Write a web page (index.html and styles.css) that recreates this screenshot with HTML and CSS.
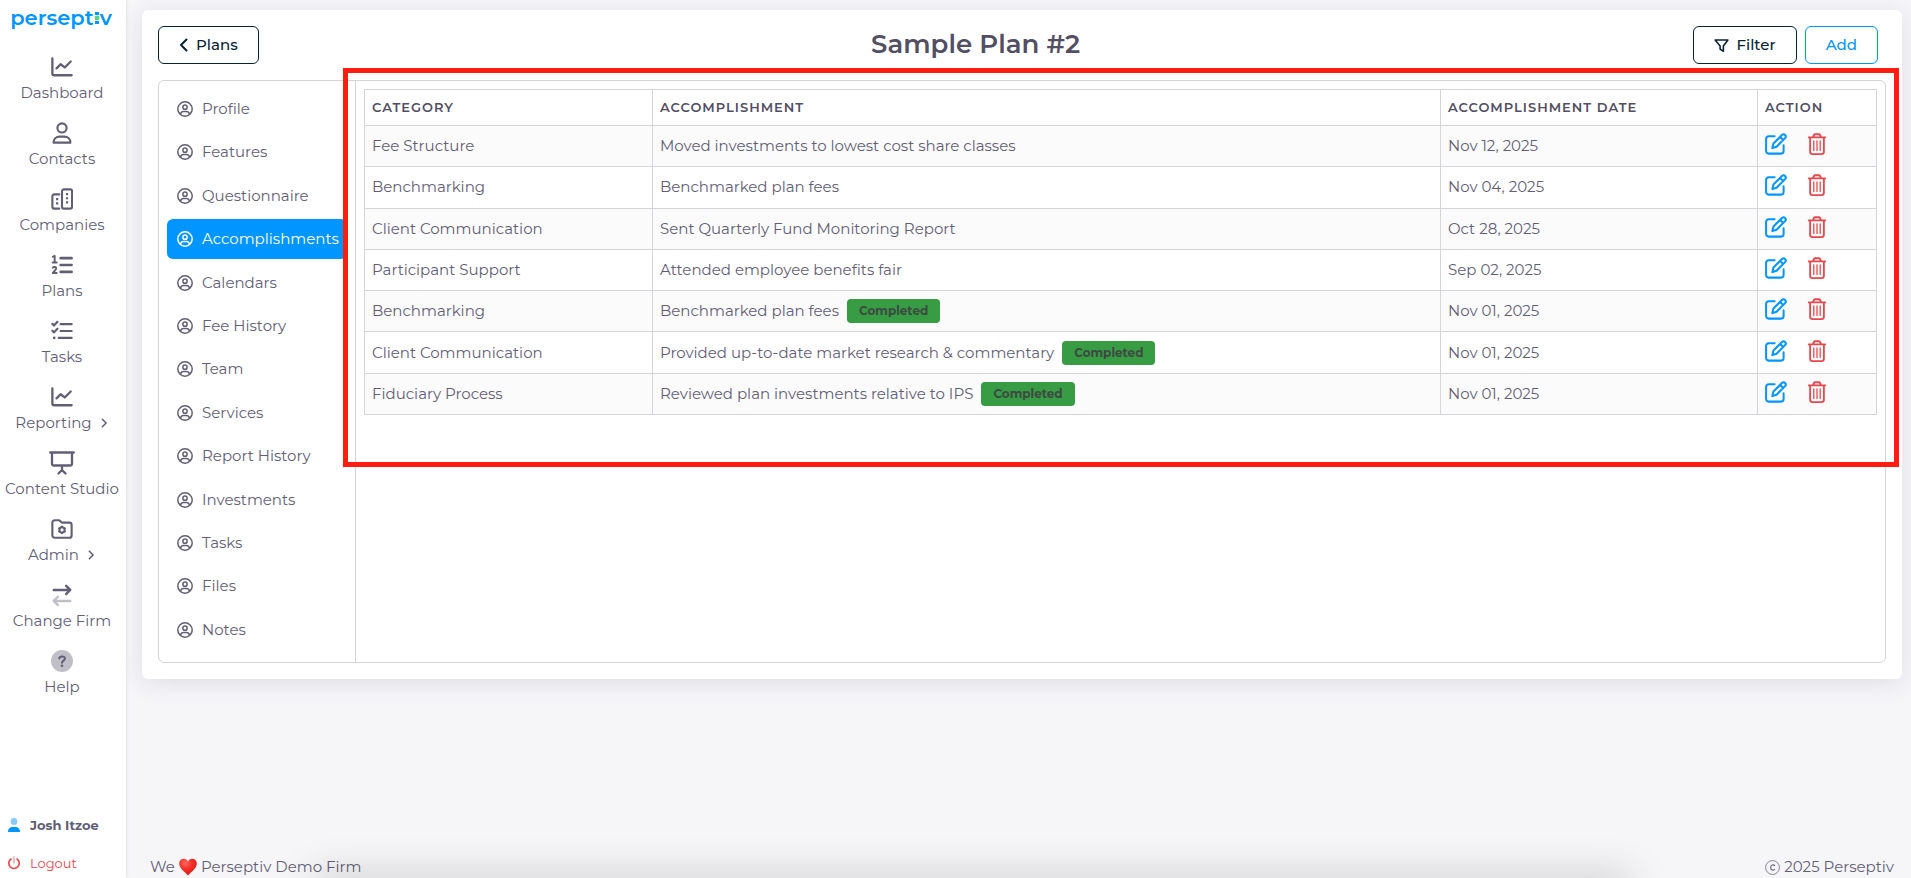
FILE: index.html
```html
<!DOCTYPE html>
<html lang="en">
<head>
<meta charset="utf-8">
<meta name="viewport" content="width=device-width, initial-scale=1">
<title>Perseptiv - Sample Plan #2</title>
<link rel="stylesheet" href="styles.css">
</head>
<body>
<svg class="sprite" aria-hidden="true">
  <symbol id="i-chart" viewBox="0 0 24 24"><path d="M1.500 2.500v16.500a2 2 0 0 0 2 2H22.500M6 13.500l4.500-4.500 4.500 3.500 6.500-6.500" fill="none" stroke="currentColor" stroke-width="2.500" stroke-linecap="round" stroke-linejoin="round"/></symbol>
  <symbol id="i-person" viewBox="0 0 24 24"><circle cx="12" cy="6.500" r="5" fill="none" stroke="currentColor" stroke-width="2.300"/><path d="M2.800 22.500c0-4 3-6.500 6.500-6.500h5.400c3.500 0 6.500 2.500 6.500 6.500z" fill="none" stroke="currentColor" stroke-width="2.300" stroke-linejoin="round"/></symbol>
  <symbol id="i-buildings" viewBox="0 0 24 24"><g fill="none" stroke="currentColor" stroke-width="2.300" stroke-linecap="round"><rect x="12" y="1.500" width="11" height="21" rx="2"/><path d="M9 7H3.500A2 2 0 0 0 1.500 9v11.500a2 2 0 0 0 2 2H9"/></g><path d="M16.300 5.500h2.400v2.400h-2.400zM16.300 10h2.400v2.400h-2.400zM16.300 14.500h2.400v2.400h-2.400zM5.500 11h2.400v2.400H5.500zM5.500 15.500h2.400v2.400H5.500z" fill="currentColor"/></symbol>
  <symbol id="i-list" viewBox="0 0 24 24"><path d="M10.500 4.500H22.500M10.500 12H22.500M10.500 19.500H22.500" fill="none" stroke="currentColor" stroke-width="2.800" stroke-linecap="round"/><path d="M2 3l2-1v7M1.800 9.200h4.400M2 15c1-1.500 4-1 3.600 1-.3 1.500-2.600 3-3.600 4.800h4.200" fill="none" stroke="currentColor" stroke-width="2.100" stroke-linecap="round" stroke-linejoin="round"/></symbol>
  <symbol id="i-checks" viewBox="0 0 24 24"><path d="M10.500 4.500h12M10.500 12h12M8.500 19.500h14M1.500 4.200l1.800 1.800L7 2M1.500 11.700l1.800 1.800L7 9.500" fill="none" stroke="currentColor" stroke-width="2.400" stroke-linecap="round" stroke-linejoin="round"/><circle cx="3.500" cy="19.500" r="1.500" fill="currentColor"/></symbol>
  <symbol id="i-screen" viewBox="0 0 26 24"><path d="M1.200 1.500h23.600M3 2v10.500a2 2 0 0 0 2 2h16a2 2 0 0 0 2-2V2M13 15v4M9.500 22.500L13 19l3.500 3.500" fill="none" stroke="currentColor" stroke-width="2.300" stroke-linecap="round" stroke-linejoin="round"/></symbol>
  <symbol id="i-folder" viewBox="0 0 24 24"><path d="M1.500 5A2.500 2.500 0 0 1 4 2.500h4.500c1.500 0 2 2.500 4 2.500H20A2.500 2.500 0 0 1 22.500 7.500V19a2.500 2.500 0 0 1-2.500 2.500H4A2.500 2.500 0 0 1 1.500 19z" fill="none" stroke="currentColor" stroke-width="2.300"/><circle cx="12" cy="13" r="2.800" fill="none" stroke="currentColor" stroke-width="2.200"/><path d="M12 8.500v2M12 15.500v2M8.100 10.800l1.700 1M14.200 14.200l1.700 1M8.100 15.200l1.700-1M14.200 11.800l1.700-1" stroke="currentColor" stroke-width="2.200"/></symbol>
  <symbol id="i-swap" viewBox="0 0 24 24"><path d="M3 6.500h18M16.500 2l4.500 4.500-4.500 4.500" fill="none" stroke="currentColor" stroke-width="2.600" stroke-linecap="round" stroke-linejoin="round"/><path d="M21 18.500H3M7.500 14L3 18.500 7.500 23" fill="none" stroke="currentColor" stroke-width="2.600" stroke-linecap="round" stroke-linejoin="round" opacity=".4"/></symbol>
  <symbol id="i-help" viewBox="0 0 24 24"><circle cx="12" cy="12" r="12" fill="currentColor" opacity=".4"/><path d="M9 9.200c.3-3 6.300-3 6.200.3-.1 2-3.200 2.200-3.200 4.300" fill="none" stroke="currentColor" stroke-width="2.200" stroke-linecap="round"/><circle cx="12" cy="17.200" r="1.400" fill="currentColor"/></symbol>
  <symbol id="i-right" viewBox="0 0 12 12"><path d="M4 1.500L8.500 6 4 10.500" fill="none" stroke="currentColor" stroke-width="1.900" stroke-linecap="round" stroke-linejoin="round"/></symbol>
  <symbol id="i-left" viewBox="0 0 9 16"><path d="M7.500 2.500L2 8l5.500 5.500" fill="none" stroke="currentColor" stroke-width="2" stroke-linecap="round" stroke-linejoin="round"/></symbol>
  <symbol id="i-user" viewBox="0 0 16 16"><g fill="none" stroke="currentColor" stroke-width="1.500"><circle cx="8" cy="8" r="7.200"/><circle cx="8" cy="6.200" r="2.100"/><path d="M3.500 13c.5-2 2-2.500 3-2.500h3c1 0 2.500.5 3 2.500"/></g></symbol>
  <symbol id="i-filter" viewBox="0 0 16 16"><path d="M1.200 2.200h13.600L10 8.500v5.700l-3.500-2.400V8.500z" fill="none" stroke="currentColor" stroke-width="1.700" stroke-linejoin="round"/></symbol>
  <symbol id="i-edit" viewBox="0 0 24 24"><path d="M10.500 3.500H4A2.800 2.800 0 0 0 1.200 6.300v13.200A2.800 2.800 0 0 0 4 22.500h13.500a2.800 2.800 0 0 0 2.800-2.800V13.500M8 16.500l1.200-5L18.500 2.200a2.400 2.400 0 0 1 3.400 3.400L12.600 15zM16.500 4.200l3.400 3.400" fill="none" stroke="currentColor" stroke-width="2.200" stroke-linecap="round" stroke-linejoin="round"/></symbol>
  <symbol id="i-trash" viewBox="0 0 20 24"><path d="M1 4.800h18M2.500 5v15.500a2.500 2.500 0 0 0 2.500 2.500h10a2.500 2.500 0 0 0 2.500-2.500V5M5.500 4.500l1.200-2.300a1.500 1.500 0 0 1 1.300-.8h4a1.500 1.500 0 0 1 1.300.8l1.200 2.300" fill="none" stroke="currentColor" stroke-width="2" stroke-linecap="round" stroke-linejoin="round"/><path d="M6.500 8.500v10.500M10 8.500v10.500M13.500 8.500v10.500" stroke="currentColor" stroke-width="1.400" stroke-linecap="round"/></symbol>
</svg>

<div class="app">
  <aside class="sidebar">
    <a class="logo" href="#" aria-label="perseptiv">persept<svg class="logo-i" viewBox="0 0 6 14" aria-hidden="true"><path d="M1 1h4v3H1zM1 10h4v3H1z" fill="#0095ff"/><circle cx="3" cy="7" r="2.400" fill="#4cd787"/></svg>v</a>
    <nav class="menu">
      <a href="#"><svg><use href="#i-chart"/></svg><span>Dashboard</span></a>
      <a href="#"><svg><use href="#i-person"/></svg><span>Contacts</span></a>
      <a href="#"><svg><use href="#i-buildings"/></svg><span>Companies</span></a>
      <a href="#"><svg><use href="#i-list"/></svg><span>Plans</span></a>
      <a href="#"><svg><use href="#i-checks"/></svg><span>Tasks</span></a>
      <a href="#"><svg><use href="#i-chart"/></svg><span class="more">Reporting <svg><use href="#i-right"/></svg></span></a>
      <a href="#"><svg class="wide"><use href="#i-screen"/></svg><span>Content Studio</span></a>
      <a href="#"><svg><use href="#i-folder"/></svg><span class="more">Admin <svg><use href="#i-right"/></svg></span></a>
      <a href="#"><svg><use href="#i-swap"/></svg><span>Change Firm</span></a>
      <a href="#"><svg><use href="#i-help"/></svg><span>Help</span></a>
    </nav>
    <div class="account">
      <a class="me" href="#"><svg viewBox="0 0 12 14"><circle cx="6" cy="3.500" r="3.400" fill="#8acbff"/><path d="M0 14c0-3.500 2-5 4.500-5h3c2.500 0 4.500 1.500 4.500 5z" fill="#0095ff"/></svg>Josh Itzoe</a>
      <a class="logout" href="#"><svg viewBox="0 0 12 14"><path d="M3 3a5.200 5.200 0 1 0 6 0" fill="none" stroke="currentColor" stroke-width="1.600" stroke-linecap="round"/><path d="M6 1v6" stroke="currentColor" stroke-width="1.500" stroke-linecap="round" opacity=".5"/></svg>Logout</a>
    </div>
  </aside>

  <div class="page">
    <main class="card">
      <header class="head">
        <button class="btn" type="button"><svg class="back"><use href="#i-left"/></svg>Plans</button>
        <h1>Sample Plan #2</h1>
        <div class="head-end"><button class="btn" type="button"><svg class="funnel"><use href="#i-filter"/></svg>Filter</button><button class="btn add" type="button">Add</button></div>
      </header>
      <div class="panel">
        <nav class="tabs">
          <a href="#"><svg><use href="#i-user"/></svg>Profile</a>
          <a href="#"><svg><use href="#i-user"/></svg>Features</a>
          <a href="#"><svg><use href="#i-user"/></svg>Questionnaire</a>
          <a href="#" class="active" aria-current="page"><svg><use href="#i-user"/></svg>Accomplishments</a>
          <a href="#"><svg><use href="#i-user"/></svg>Calendars</a>
          <a href="#"><svg><use href="#i-user"/></svg>Fee History</a>
          <a href="#"><svg><use href="#i-user"/></svg>Team</a>
          <a href="#"><svg><use href="#i-user"/></svg>Services</a>
          <a href="#"><svg><use href="#i-user"/></svg>Report History</a>
          <a href="#"><svg><use href="#i-user"/></svg>Investments</a>
          <a href="#"><svg><use href="#i-user"/></svg>Tasks</a>
          <a href="#"><svg><use href="#i-user"/></svg>Files</a>
          <a href="#"><svg><use href="#i-user"/></svg>Notes</a>
        </nav>
        <div class="content">
          <section class="highlight">
            <table>
              <colgroup><col class="c-cat"><col><col class="c-date"><col class="c-action"></colgroup>
              <thead><tr><th>Category</th><th>Accomplishment</th><th>Accomplishment Date</th><th>Action</th></tr></thead>
              <tbody>
                <tr><td>Fee Structure</td><td>Moved investments to lowest cost share classes</td><td>Nov 12, 2025</td><td><div class="actions"><button type="button" aria-label="Edit"><svg><use href="#i-edit"/></svg></button><button class="del" type="button" aria-label="Delete"><svg><use href="#i-trash"/></svg></button></div></td></tr>
                <tr><td>Benchmarking</td><td>Benchmarked plan fees</td><td>Nov 04, 2025</td><td><div class="actions"><button type="button" aria-label="Edit"><svg><use href="#i-edit"/></svg></button><button class="del" type="button" aria-label="Delete"><svg><use href="#i-trash"/></svg></button></div></td></tr>
                <tr><td>Client Communication</td><td>Sent Quarterly Fund Monitoring Report</td><td>Oct 28, 2025</td><td><div class="actions"><button type="button" aria-label="Edit"><svg><use href="#i-edit"/></svg></button><button class="del" type="button" aria-label="Delete"><svg><use href="#i-trash"/></svg></button></div></td></tr>
                <tr><td>Participant Support</td><td>Attended employee benefits fair</td><td>Sep 02, 2025</td><td><div class="actions"><button type="button" aria-label="Edit"><svg><use href="#i-edit"/></svg></button><button class="del" type="button" aria-label="Delete"><svg><use href="#i-trash"/></svg></button></div></td></tr>
                <tr><td>Benchmarking</td><td><div class="note">Benchmarked plan fees<span class="badge">Completed</span></div></td><td>Nov 01, 2025</td><td><div class="actions"><button type="button" aria-label="Edit"><svg><use href="#i-edit"/></svg></button><button class="del" type="button" aria-label="Delete"><svg><use href="#i-trash"/></svg></button></div></td></tr>
                <tr><td>Client Communication</td><td><div class="note">Provided up-to-date market research &amp; commentary<span class="badge">Completed</span></div></td><td>Nov 01, 2025</td><td><div class="actions"><button type="button" aria-label="Edit"><svg><use href="#i-edit"/></svg></button><button class="del" type="button" aria-label="Delete"><svg><use href="#i-trash"/></svg></button></div></td></tr>
                <tr><td>Fiduciary Process</td><td><div class="note">Reviewed plan investments relative to IPS<span class="badge">Completed</span></div></td><td>Nov 01, 2025</td><td><div class="actions"><button type="button" aria-label="Edit"><svg><use href="#i-edit"/></svg></button><button class="del" type="button" aria-label="Delete"><svg><use href="#i-trash"/></svg></button></div></td></tr>
              </tbody>
            </table>
          </section>
        </div>
      </div>
    </main>
    <footer class="foot">
      <span class="love">We <svg viewBox="0 0 18 18" role="img" aria-label="love"><defs><radialGradient id="heart" cx=".35" cy=".25" r=".9"><stop offset="0" stop-color="#ff6a5e"/><stop offset=".4" stop-color="#f6302a"/><stop offset="1" stop-color="#d3150f"/></radialGradient></defs><path d="M9 17.500C6 14 .2 10.500.2 5.500.2 2.500 2.300.7 4.800.7 6.800.7 8.300 1.900 9 3.600 9.700 1.900 11.200.7 13.200.7c2.500 0 4.600 1.800 4.600 4.800 0 5-5.800 8.500-8.800 12z" fill="url(#heart)"/></svg> Perseptiv Demo Firm</span>
      <span class="copy"><svg viewBox="0 0 16 16" role="img" aria-label="Copyright"><circle cx="8" cy="8" r="7.400" fill="none" stroke="currentColor" stroke-width=".8"/><path d="M10.500 6.500C9.500 4.500 6 4.800 6 8s3.500 3.500 4.500 1.500" fill="none" stroke="currentColor" stroke-width="1.100"/></svg> 2025 Perseptiv</span>
    </footer>
  </div>
</div>
<div class="dock-shadow" aria-hidden="true"></div>
</body>
</html>
```

FILE: styles.css
```css
* { box-sizing: border-box; }

body {
  margin: 0;
  background: #f6f6f9;
  color: #625e74;
  font: 400 15px/24px Montserrat, Inter, "Open Sans", sans-serif;
  overflow: hidden;
}

a { color: inherit; text-decoration: none; }
button { font: inherit; cursor: pointer; }
svg { display: block; flex: none; }
.sprite { position: absolute; width: 0; height: 0; }

.app { display: flex; min-height: 100vh; }

/* Sidebar */
.sidebar {
  flex: none;
  width: 126px;
  display: flex;
  flex-direction: column;
  background: #fff;
  box-shadow: 0 0 4px rgba(60, 50, 90, .16);
}

.logo {
  display: flex;
  align-items: center;
  justify-content: center;
  height: 36px;
  padding-right: 4px;
  color: #0095ff;
  font-size: 21px;
  font-weight: 600;
}
.logo-i { width: 6px; height: 14px; }

.menu {
  display: flex;
  flex-direction: column;
  gap: 12px;
  padding: 19px 2px 0 0;
}
.menu a {
  display: flex;
  flex-direction: column;
  align-items: center;
  gap: 2px;
  height: 54px;
  white-space: nowrap;
}
.menu svg { width: 22px; height: 24px; }
.menu .wide { width: 26px; }
.more { display: flex; align-items: center; gap: 7px; }
.menu .more svg { width: 10px; height: 10px; }

.account {
  margin-top: auto;
  padding: 0 8px 3px;
  display: grid;
  gap: 14px;
  font-size: 13px;
}
.account a { display: flex; align-items: center; gap: 10px; }
.account svg { width: 12px; height: 14px; }
.me { font-weight: 700; }
.logout { color: #e5484d; }

/* Page */
.page {
  flex: 1;
  min-width: 0;
  display: flex;
  flex-direction: column;
  padding: 10px 9px 0 16px;
}
.card {
  padding: 16px;
  border-radius: 6px;
  background: #fff;
  box-shadow: 0 4px 24px rgba(60, 50, 90, .12);
}

.head {
  display: flex;
  justify-content: space-between;
  align-items: center;
  margin-bottom: 16px;
  padding-right: 8px;
}
.head h1 { margin: 0; padding-bottom: 2px; font-size: 26px; line-height: 32px; font-weight: 600; color: #524e63; }
.head-end { display: flex; gap: 8px; }
.btn {
  display: flex;
  align-items: center;
  gap: 8px;
  height: 38px;
  padding: 0 20px;
  border: 1px solid #062335;
  border-radius: 6px;
  background: #fff;
  color: #062335;
  font-weight: 500;
}
.add { border-color: #0095ff; color: #0095ff; }
.back { width: 9px; height: 16px; }
.funnel { width: 15px; height: 15px; }

.panel {
  display: flex;
  border: 1px solid #d4d4d9;
  border-radius: 6px;
}
.tabs {
  flex: none;
  width: 197px;
  min-height: 581px;
  padding: 8px 8px 12px;
  border-right: 1px solid #d4d4d9;
  display: flex;
  flex-direction: column;
  justify-content: space-between;
}
.tabs a {
  display: flex;
  align-items: center;
  gap: 9px;
  height: 40px;
  padding: 0 10px;
  border-radius: 6px;
  white-space: nowrap;
}
.tabs svg { width: 16px; height: 16px; }
.tabs .active { background: #0095ff; color: #fff; }

.content { flex: 1; min-width: 0; }
.highlight { position: relative; padding: 8px 8px 39px; }
.highlight::after {
  content: "";
  position: absolute;
  inset: -13px -14px -13px -13px;
  border: 5px solid #ff1d11;
  pointer-events: none;
}

table {
  width: 100%;
  height: 326px;
  border-collapse: collapse;
  table-layout: fixed;
}
.c-cat { width: 288px; }
.c-date { width: 317px; }
.c-action { width: 119px; }
th, td { padding: 0 7px; border: 1px solid #d4d4d9; text-align: left; }
th {
  height: 36px;
  padding-bottom: 1px;
  color: #524e63;
  font-size: 13px;
  line-height: 18px;
  font-weight: 600;
  letter-spacing: 1px;
  text-transform: uppercase;
}
tbody tr:nth-child(odd) { background: #fbfbfc; }

.note { display: flex; align-items: center; gap: 8px; }
.badge {
  padding: 0 12px;
  border-radius: 4px;
  background: #379c44;
  color: #3d4a42;
  font-size: 12px;
  font-weight: 700;
}
.actions { display: flex; gap: 19px; padding-bottom: 4px; }
.actions button { padding: 0; border: 0; background: none; color: #0095ff; }
.actions svg { width: 22px; height: 22px; }
.actions .del { color: #e5484d; }

.foot {
  margin-top: auto;
  display: flex;
  justify-content: space-between;
  line-height: 22px;
  padding: 0 8px;
}
.love, .copy { display: flex; align-items: center; gap: 4px; }
.love svg { width: 18px; height: 18px; }
.copy svg { width: 15px; height: 15px; }

/* Soft shadow cast upward from below the window */
.dock-shadow {
  position: fixed;
  left: 314px;
  right: 280px;
  bottom: -20px;
  height: 20px;
  box-shadow: 0 0 42px 0 rgba(0, 0, 0, .24);
  pointer-events: none;
}
```
